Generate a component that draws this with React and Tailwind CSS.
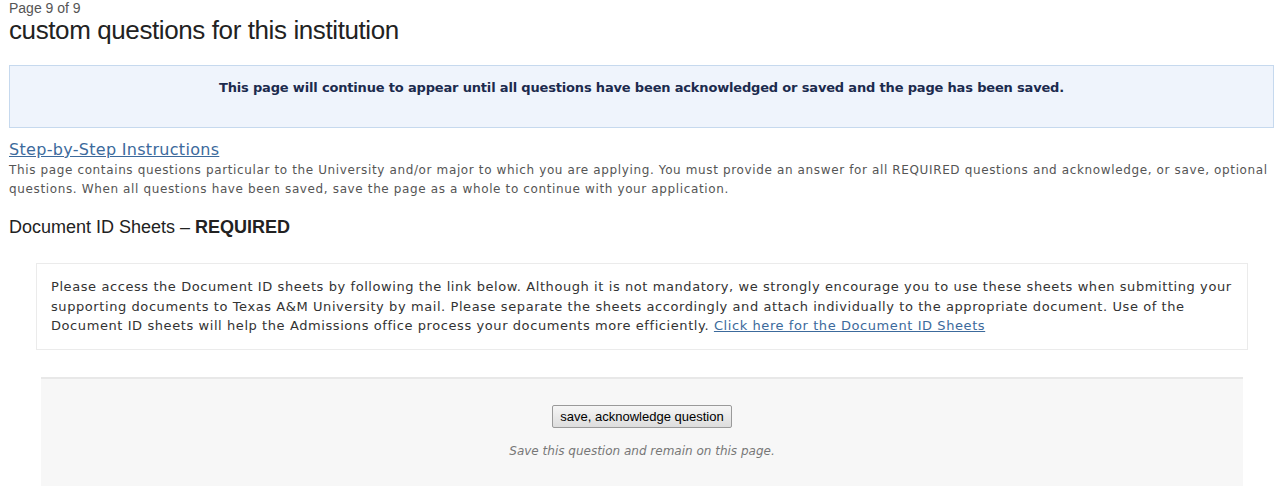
export default function App() {
  const verdana = { fontFamily: '"DejaVu Sans", Verdana, sans-serif' };
  return (
    <div className="min-h-[486px] bg-white pl-[9px] pr-[1px]" style={{ fontFamily: '"Liberation Sans", Arial, sans-serif' }}>
      {/* heading */}
      <div className="pt-[1px] text-[14px] leading-[15px] text-[#555]">Page 9 of 9</div>
      <h1 className="text-[26px] leading-[28px] text-[#222] tracking-[-0.4px]">custom questions for this institution</h1>

      {/* notice */}
      <div className="mt-[21px] h-[63px] border border-[#c6d9ee] bg-[#eff4fc] pt-[14px] text-center">
        <p className="text-[13px] font-bold leading-[16px] tracking-[-0.17px] text-[#1c2b4e]" style={verdana}>
          This page will continue to appear until all questions have been acknowledged or saved and the page has been saved.
        </p>
      </div>

      {/* instructions */}
      <div className="mt-[12px]" style={verdana}>
        <a href="#" className="block text-[16px] leading-[19px] tracking-[0.3px] text-[#3c6a9c] underline">Step-by-Step Instructions</a>
        <p className="mt-[2px] text-[12px] leading-[19px] tracking-[0.63px] text-[#555] pr-[4px]">
          This page contains questions particular to the University and/or major to which you are applying. You must provide an answer for all REQUIRED questions and acknowledge, or save, optional questions. When all questions have been saved, save the page as a whole to continue with your application.
        </p>
      </div>

      <h2 className="mt-[18px] text-[18px] leading-[20px] text-[#222]">
        Document ID Sheets – <span className="font-bold">REQUIRED</span>
      </h2>

      {/* question body */}
      <div className="mt-[26px] mr-[26px] ml-[27px] border border-[#ebebeb] bg-white px-[14px] pt-[13px] pb-[13px]" style={verdana}>
        <p className="text-[13px] leading-[19.5px] tracking-[0.58px] text-[#333]">
          Please access the Document ID sheets by following the link below. Although it is not mandatory, we strongly encourage you to use these sheets when submitting your supporting documents to Texas A&amp;M University by mail. Please separate the sheets accordingly and attach individually to the appropriate document. Use of the Document ID sheets will help the Admissions office process your documents more efficiently.{' '}
          <a href="#" className="text-[#3c6a9c] underline">Click here for the Document ID Sheets</a>
        </p>
      </div>

      {/* actions */}
      <div className="mt-[27px] mr-[31px] ml-[32px] h-[120px] border-t-2 border-[#e8e8e8] bg-[#f7f7f7] pt-[25px] text-center">
        <button className="h-[23px] rounded-[2px] border border-[#9a9a9a] bg-gradient-to-b from-[#f6f6f6] to-[#dddddd] px-[7px] text-[13px] leading-[20px] text-black">
          save, acknowledge question
        </button>
        <p className="mt-[15px] text-[12px] italic leading-[16px] text-[#777]" style={verdana}>
          Save this question and remain on this page.
        </p>
      </div>
    </div>
  );
}
